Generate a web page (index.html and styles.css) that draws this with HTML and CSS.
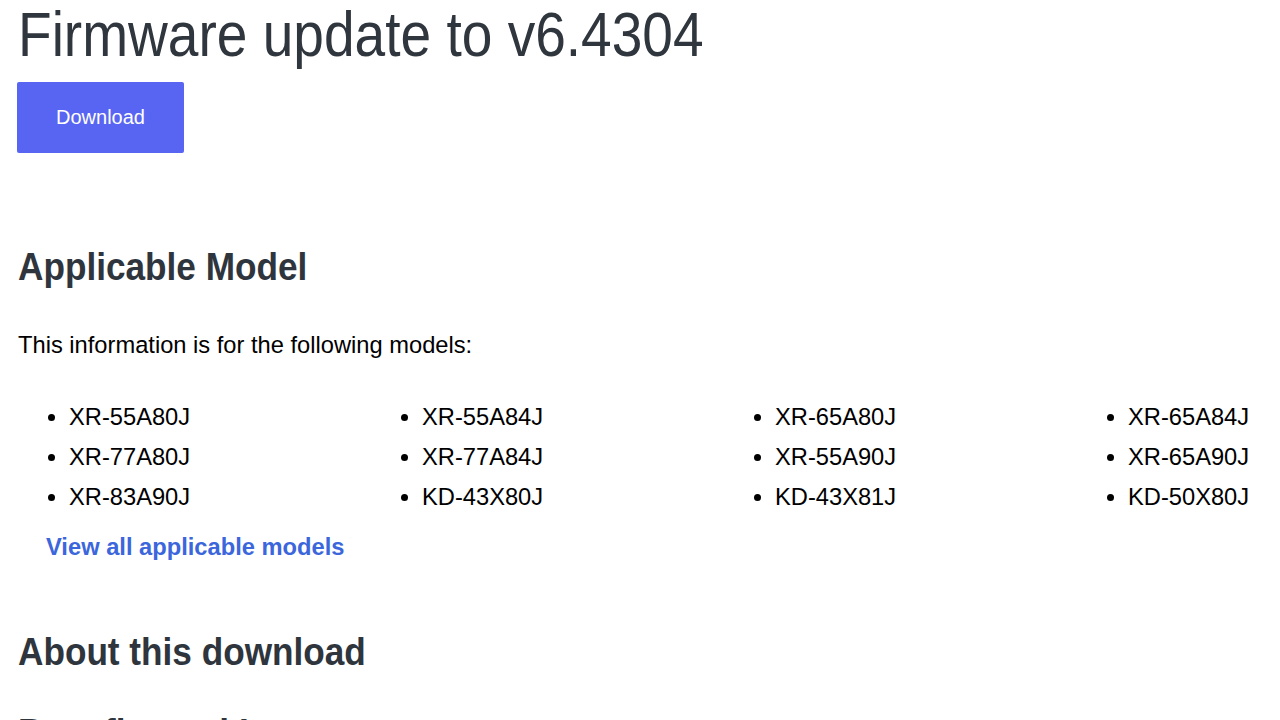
FILE: index.html
```html
<!DOCTYPE html>
<html lang="en">
<head>
<meta charset="utf-8">
<title>Firmware update to v6.4304</title>
<link rel="stylesheet" href="styles.css">
</head>
<body>
<main class="page">
  <h1 class="title"><span class="squeeze">Firmware update to v6.4304</span></h1>
  <a class="btn-download" href="#">Download</a>

  <section class="section-models">
    <h2 class="section-title"><span class="squeeze squeeze-h2">Applicable Model</span></h2>
    <p class="intro">This information is for the following models:</p>
    <ul class="model-list">
      <li>XR-55A80J</li>
      <li>XR-55A84J</li>
      <li>XR-65A80J</li>
      <li>XR-65A84J</li>
      <li>XR-77A80J</li>
      <li>XR-77A84J</li>
      <li>XR-55A90J</li>
      <li>XR-65A90J</li>
      <li>XR-83A90J</li>
      <li>KD-43X80J</li>
      <li>KD-43X81J</li>
      <li>KD-50X80J</li>
    </ul>
    <a class="view-all" href="#">View all applicable models</a>
  </section>

  <section class="section-about">
    <h2 class="section-title"><span class="squeeze squeeze-h2">About this download</span></h2>
    <h3 class="sub-title"><span class="squeeze squeeze-h2">Benefits and Improvements</span></h3>
  </section>
</main>
</body>
</html>
```

FILE: styles.css
```css
html, body {
  margin: 0;
  padding: 0;
  background: #ffffff;
  overflow: hidden;
}

body {
  font-family: "Liberation Sans", Arial, sans-serif;
  color: #000000;
}

.page {
  padding: 0 18px;
}

.squeeze {
  display: inline-block;
  transform-origin: left center;
  white-space: nowrap;
}

.title {
  margin: 0;
  font-size: 63px;
  font-weight: 400;
  line-height: 1.1;
  color: #30363e;
  height: 69px;
}

.title .squeeze {
  transform: scaleX(0.874);
}

.btn-download {
  display: flex;
  align-items: center;
  justify-content: center;
  width: 167px;
  height: 71px;
  margin: 13px 0 0 -1px;
  background: #5865f2;
  color: #ffffff;
  font-size: 20px;
  text-decoration: none;
  border-radius: 2px;
}

.section-models {
  padding-top: 90px;
}

.section-title,
.sub-title {
  margin: 0;
  font-size: 39px;
  font-weight: 700;
  line-height: 47px;
  height: 47px;
  color: #2f353d;
}

.squeeze-h2 {
  transform: scaleX(0.902);
}

.intro {
  margin: 41px 0 0;
  font-size: 23.7px;
  line-height: 29px;
}

.model-list {
  display: grid;
  grid-template-columns: repeat(3, 353px) 1fr;
  margin: 37px 0 0;
  padding: 0 0 0 51px;
  font-size: 23.7px;
  line-height: 40px;
}

.view-all {
  display: block;
  margin: 16px 0 0 28px;
  font-size: 23.7px;
  font-weight: 700;
  line-height: 29px;
  color: #3b66dc;
  text-decoration: none;
}

.section-about {
  padding-top: 66px;
}

.sub-title {
  margin-top: 34px;
}
```
